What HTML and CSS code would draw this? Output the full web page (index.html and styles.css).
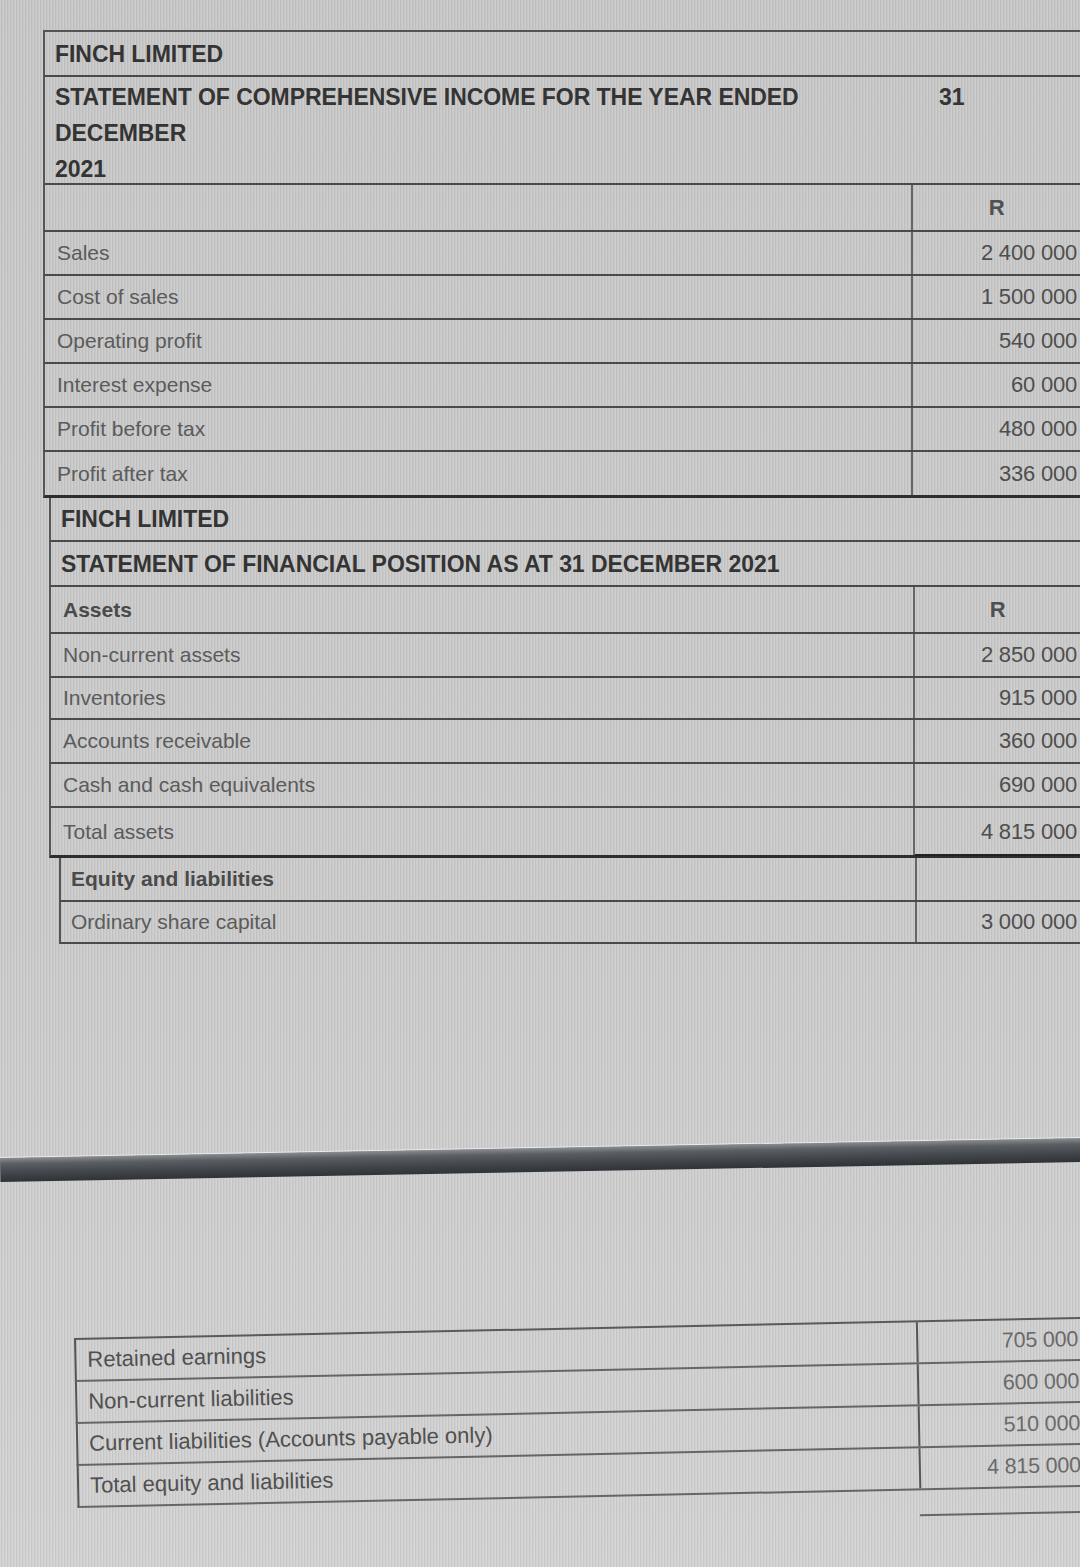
FILE: index.html
```html
<!DOCTYPE html>
<html lang="en">
<head>
<meta charset="utf-8">
<title>Finch Limited</title>
<link rel="stylesheet" href="styles.css">
</head>
<body>
<div class="page">
  <section class="sheet s1">
    <div class="row full h45"><div class="head">FINCH LIMITED</div></div>
    <div class="row full title">
      <div class="title-text head">STATEMENT OF COMPREHENSIVE INCOME FOR THE YEAR ENDED<br>DECEMBER<br>2021</div>
      <div class="title-day head">31</div>
    </div>
    <div class="row h47"><div class="label"></div><div class="val cur">R</div></div>
    <div class="row h44"><div class="label">Sales</div><div class="val">2 400 000</div></div>
    <div class="row h44"><div class="label">Cost of sales</div><div class="val">1 500 000</div></div>
    <div class="row h44"><div class="label">Operating profit</div><div class="val">540 000</div></div>
    <div class="row h44"><div class="label">Interest expense</div><div class="val">60 000</div></div>
    <div class="row h44"><div class="label">Profit before tax</div><div class="val">480 000</div></div>
    <div class="row h46 thick"><div class="label">Profit after tax</div><div class="val">336 000</div></div>
  </section>

  <section class="sheet s2">
    <div class="row full h44"><div class="head">FINCH LIMITED</div></div>
    <div class="row full h45"><div class="head">STATEMENT OF FINANCIAL POSITION AS AT 31 DECEMBER 2021</div></div>
    <div class="row h47"><div class="label strong">Assets</div><div class="val cur">R</div></div>
    <div class="row h44"><div class="label">Non-current assets</div><div class="val">2 850 000</div></div>
    <div class="row h42"><div class="label">Inventories</div><div class="val">915 000</div></div>
    <div class="row h44"><div class="label">Accounts receivable</div><div class="val">360 000</div></div>
    <div class="row h44"><div class="label">Cash and cash equivalents</div><div class="val">690 000</div></div>
    <div class="row h50 thick"><div class="label">Total assets</div><div class="val">4 815 000</div></div>
  </section>

  <section class="sheet s3">
    <div class="row h44"><div class="label strong">Equity and liabilities</div><div class="val"></div></div>
    <div class="row h42"><div class="label">Ordinary share capital</div><div class="val">3 000 000</div></div>
  </section>

  <div class="bezel"></div>

  <section class="sheet s4">
    <div class="row h42"><div class="label">Retained earnings</div><div class="val">705 000</div></div>
    <div class="row h42"><div class="label">Non-current liabilities</div><div class="val">600 000</div></div>
    <div class="row h42"><div class="label">Current liabilities (Accounts payable only)</div><div class="val">510 000</div></div>
    <div class="row h42"><div class="label">Total equity and liabilities</div><div class="val">4 815 000</div></div>
    <div class="row tail"><div class="label"></div><div class="val"></div></div>
  </section>
</div>
</body>
</html>
```

FILE: styles.css
```css
* { box-sizing: border-box; }

html, body {
  margin: 0;
  padding: 0;
}

body {
  width: 1080px;
  height: 1567px;
  overflow: hidden;
  font-family: "Liberation Sans", Arial, sans-serif;
  color: #555;
  background-color: #cbcbcb;
  background-image:
    repeating-linear-gradient(90deg, rgba(255,255,255,0.10) 0 1px, rgba(0,0,0,0.05) 1px 2px, rgba(255,255,255,0) 2px 3px),
    linear-gradient(180deg, #c7c7c7 0%, #cbcbcb 60%, #d2d2d2 100%);
}

.page {
  padding-top: 30px;
  width: 1080px;
}

.s1 { margin-left: 43px; border-top: 2px solid #555; }
.s2 { margin-left: 49px; }
.s3 { margin-left: 59px; }

.row {
  display: grid;
  border-left: 2px solid #555;
  border-bottom: 2px solid #4a4a4a;
  align-items: center;
}

.s1 .row { grid-template-columns: 868px 1fr; }
.s2 .row { grid-template-columns: 864px 1fr; }
.s3 .row { grid-template-columns: 856px 1fr; }
.s4 .row { grid-template-columns: 842px 1fr; }

.row.full { grid-template-columns: 1fr; }
.row.title { grid-template-columns: 894px 1fr; height: 108px; align-items: start; }

.h42 { height: 42px; }
.h44 { height: 44px; }
.h45 { height: 45px; }
.h46 { height: 46px; }
.h47 { height: 47px; }
.h50 { height: 50px; }

.row.thick { border-bottom: 3px solid #2e2e2e; }
.s2 .row.thick .val { border-bottom: 2px solid #222; margin-bottom: -2px; }

.head {
  font-size: 23px;
  font-weight: bold;
  color: #343434;
  padding-left: 10px;
  letter-spacing: -0.05px;
  line-height: 26px;
}

.title-text {
  line-height: 36px;
  padding-top: 2px;
}

.title-day {
  padding-left: 0;
  padding-top: 2px;
  line-height: 36px;
}

.label {
  height: 100%;
  display: flex;
  align-items: center;
  padding-left: 12px;
  font-size: 21px;
  color: #5b5b5b;
  border-right: 2px solid #666;
}

.label.strong {
  color: #4a4a4a;
  font-weight: bold;
}

.s3 .label { padding-left: 10px; }

.val {
  height: 100%;
  display: flex;
  align-items: center;
  justify-content: flex-end;
  padding-right: 3px;
  font-size: 22px;
  color: #4e4e4e;
  letter-spacing: -0.2px;
}

.val.cur {
  justify-content: center;
  font-weight: bold;
  color: #505050;
  padding-right: 0;
}

.bezel {
  margin-top: 214px;
  width: 1120px;
  height: 24px;
  transform-origin: left top;
  transform: rotate(-1.06deg);
  background: linear-gradient(180deg, #8a8d91 0%, #5b5e63 25%, #44474c 60%, #2f3237 100%);
  box-shadow: 0 -1px 0 rgba(255,255,255,0.6);
}

.s4 {
  margin-top: 156px;
  margin-left: 74px;
  width: 1030px;
  border-top: 2px solid #5a5a5a;
  transform-origin: left top;
  transform: rotate(-1.2deg);
}

.s4 .row { border-bottom: 2px solid #666; }
.s4 .label { font-size: 22px; color: #505050; padding-left: 11px; border-right: 2px solid #555; }
.s4 .val { font-size: 21.5px; color: #6a6a6a; padding-right: 26px; }

.s4 .row.tail {
  height: 26px;
  border-left: none;
  border-bottom: none;
}
.s4 .row.tail .label { border-right: none; }
.s4 .row.tail .val { border-bottom: 2px solid #666; }
```
